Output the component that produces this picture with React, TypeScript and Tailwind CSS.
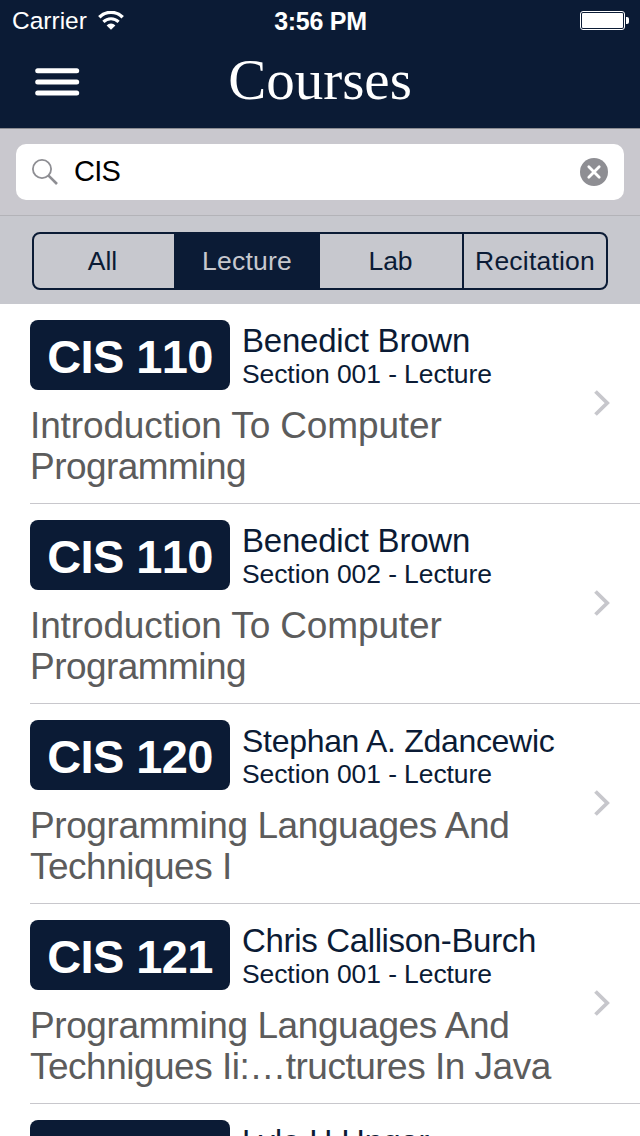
type Course = {
  code: string;
  teacher: string;
  teacherFit: string;
  section: string;
  title: [string, string];
  titleFit: [string, string];
};

const courses: Course[] = [
  { code: "CIS 110", teacher: "Benedict Brown", teacherFit: "text-[33px] leading-[41px] tracking-[-0.22px]", section: "Section 001 - Lecture", title: ["Introduction To Computer", "Programming"], titleFit: ["tracking-[-0.13px]", "tracking-[-0.55px]"] },
  { code: "CIS 110", teacher: "Benedict Brown", teacherFit: "text-[33px] leading-[41px] tracking-[-0.22px]", section: "Section 002 - Lecture", title: ["Introduction To Computer", "Programming"], titleFit: ["tracking-[-0.13px]", "tracking-[-0.55px]"] },
  { code: "CIS 120", teacher: "Stephan A. Zdancewic", teacherFit: "text-[32px] leading-[42px] tracking-[-0.3px]", section: "Section 001 - Lecture", title: ["Programming Languages And", "Techniques I"], titleFit: ["tracking-[-0.41px]", "tracking-[-0.5px]"] },
  { code: "CIS 121", teacher: "Chris Callison-Burch", teacherFit: "text-[33px] leading-[41px] tracking-[-0.34px]", section: "Section 001 - Lecture", title: ["Programming Languages And", "Technigues Ii:…tructures In Java"], titleFit: ["tracking-[-0.41px]", "tracking-[-0.5px]"] },
  { code: "CIS 125", teacher: "Lyle H Ungar", teacherFit: "text-[32px] leading-[42px] tracking-[0.15px]", section: "Section 001 - Lecture", title: ["Technology And Policy", ""], titleFit: ["tracking-[-0.4px]", "tracking-[-0.4px]"] },
];

function StatusBar() {
  return (
    <div className="grid h-10 grid-cols-3 items-center pr-[11px] pl-3 text-[24.5px] leading-10 text-white">
      <div className="flex items-center gap-[11px]">
        <span>Carrier</span>
        <svg className="h-[19px] w-[26px]" viewBox="0 0 26 19" fill="none" stroke="#fff">
          <path d="M1.3 6.2a16.6 16.6 0 0 1 23.4 0" strokeWidth="3.4" />
          <path d="M5.4 10.9a10.7 10.7 0 0 1 15.2 0" strokeWidth="3" />
          <path d="M13 18.8l-4.4-4.4a6.2 6.2 0 0 1 8.8 0z" fill="#fff" stroke="none" />
        </svg>
      </div>
      <span className="pt-px text-center text-[25px] font-bold tracking-[-0.25px] whitespace-nowrap">3:56 PM</span>
      <svg className="h-[19px] w-[49px] justify-self-end" viewBox="0 0 49 19">
        <rect x="0.5" y="0.5" width="44" height="18" rx="2.5" fill="none" stroke="#fff" />
        <rect x="2" y="2" width="41" height="15" rx="1" fill="#fff" />
        <path d="M46 6h1a2 2 0 0 1 2 2v3a2 2 0 0 1-2 2h-1z" fill="#fff" />
      </svg>
    </div>
  );
}

function TitleBar() {
  return (
    <div className="grid h-[88px] grid-cols-[1fr_auto_1fr] items-start text-white">
      <svg className="mt-7 ml-[35px] h-7 w-[45px]" viewBox="0 0 45 28" fill="#fff">
        <rect x="0.2" y="0.3" width="44" height="5" rx="2.5" />
        <rect x="0.2" y="11.5" width="44" height="5" rx="2.5" />
        <rect x="0.2" y="22.6" width="44" height="5" rx="2.5" />
      </svg>
      <h1 className="font-['Liberation_Serif',serif] text-[57px] leading-[80px]">Courses</h1>
    </div>
  );
}

function SearchBar() {
  return (
    <div className="flex h-[88px] items-center border-t border-b border-t-[#8b8c92] border-b-[#b3b3b8] bg-[#c9c8ce] px-4">
      <div className="flex h-14 w-full items-center rounded-[10px] bg-white pr-4 pl-4">
        <svg className="h-[26px] w-[26px]" viewBox="0 0 26 26" fill="none" stroke="#8e8e93">
          <circle cx="10" cy="10" r="9.1" strokeWidth="1.8" />
          <path d="M16.3 16.3l8.7 8.7" strokeWidth="2.6" />
        </svg>
        <span className="ml-4 flex-1 text-[29px] tracking-[-0.8px] text-black">CIS</span>
        <svg className="h-7 w-7" viewBox="0 0 28 28">
          <circle cx="14" cy="14" r="14" fill="#8e8e93" />
          <path d="M8.8 8.8l10.4 10.4M19.2 8.8L8.8 19.2" stroke="#fff" strokeWidth="2.8" strokeLinecap="round" />
        </svg>
      </div>
    </div>
  );
}

function SegmentedControl() {
  return (
    <div className="h-[88px] bg-[#c7c8ce] px-8 pt-4">
      <div className="grid h-[58px] grid-cols-[140px_146px_142px_144px] overflow-hidden rounded-lg border-2 border-[#0b1b35] text-center text-[26.5px] leading-[54px] text-[#0b1b35]">
        <span className="pr-[3px]">All</span>
        <span className="bg-[#0b1b35] tracking-[0.2px] text-[#c7c8ce]">Lecture</span>
        <span className="pr-px">Lab</span>
        <span className="border-l-2 border-[#0b1b35] tracking-[0.2px]">Recitation</span>
      </div>
    </div>
  );
}

function CourseRow({ course }: { course: Course }) {
  return (
    <li className="ml-[30px] flex h-[200px] shrink-0 items-center justify-between border-b border-[#c8c7cc] pr-[30px]">
      <div className="h-full pt-4">
        <div className="flex h-[70px] gap-3">
          <div className="h-[70px] w-[200px] rounded-lg bg-[#0b1b35] text-center text-[47px] leading-[73px] font-bold tracking-[-0.6px] text-white [font-kerning:none]">
            {course.code}
          </div>
          <div className="whitespace-nowrap text-[#0b1b35]">
            <div className={`h-[38px] ${course.teacherFit}`}>{course.teacher}</div>
            <div className="text-[26.5px] leading-[32px] tracking-[-0.1px]">{course.section}</div>
          </div>
        </div>
        <div className="pt-[15px] text-[37px] leading-[41px] whitespace-nowrap text-[#5c5c5c]">
          <div className={course.titleFit[0]}>{course.title[0]}</div>
          <div className={course.titleFit[1]}>{course.title[1]}</div>
        </div>
      </div>
      <svg className="mb-[2px] h-[26px] w-4 shrink-0" viewBox="0 0 16 26" fill="none" stroke="#c7c7cc" strokeWidth="3.8">
        <path d="M1.5 1.5L13.2 13L1.5 24.5" />
      </svg>
    </li>
  );
}

export default function App() {
  return (
    <div className="flex h-[1136px] w-[640px] flex-col overflow-hidden bg-white font-['Liberation_Sans',sans-serif]">
      <header className="h-32 shrink-0 bg-[#0b1b35]">
        <StatusBar />
        <TitleBar />
      </header>
      <SearchBar />
      <SegmentedControl />
      <ul className="flex min-h-0 flex-1 flex-col overflow-hidden">
        {courses.map((course, i) => (
          <CourseRow key={i} course={course} />
        ))}
      </ul>
    </div>
  );
}
